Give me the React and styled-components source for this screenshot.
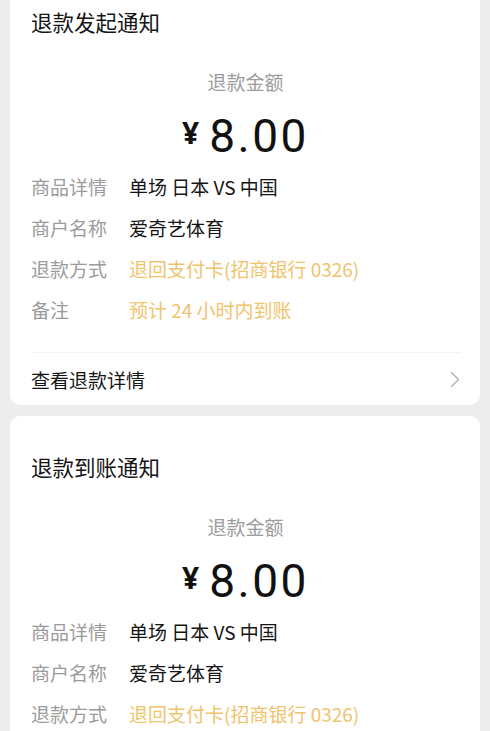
import React from "react";
import styled, { createGlobalStyle } from "styled-components";

const notices = [
  {
    title: "退款发起通知",
    amount: "8.00",
    rows: [
      { label: "商品详情", value: "单场 日本 VS 中国" },
      { label: "商户名称", value: "爱奇艺体育" },
      { label: "退款方式", value: "退回支付卡(招商银行 0326)", accent: true },
      { label: "备注", value: "预计 24 小时内到账", accent: true },
    ],
    link: "查看退款详情",
  },
  {
    title: "退款到账通知",
    amount: "8.00",
    rows: [
      { label: "商品详情", value: "单场 日本 VS 中国" },
      { label: "商户名称", value: "爱奇艺体育" },
      { label: "退款方式", value: "退回支付卡(招商银行 0326)", accent: true },
      { label: "备注", value: "预计 24 小时内到账", accent: true },
    ],
    link: "查看退款详情",
  },
];

function App() {
  return (
    <>
      <GlobalStyle />
      <Page>
        {notices.map((n, i) => (
          <Card key={i}>
            <Title>{n.title}</Title>
            <AmountLabel>退款金额</AmountLabel>
            <Amount>
              <Yen>¥</Yen>
              <Digits>{n.amount}</Digits>
            </Amount>
            <Rows>
              {n.rows.map((r) => (
                <Row key={r.label}>
                  <Label>{r.label}</Label>
                  <Value $accent={r.accent}>{r.value}</Value>
                </Row>
              ))}
            </Rows>
            <Footer>
              <span>{n.link}</span>
              <svg width="10" height="17" viewBox="0 0 10 17">
                <path
                  d="M1.5 1.5 L8.5 8.5 L1.5 15.5"
                  fill="none"
                  stroke="#b3b3b3"
                  strokeWidth="1.5"
                  strokeLinecap="round"
                  strokeLinejoin="round"
                />
              </svg>
            </Footer>
          </Card>
        ))}
      </Page>
    </>
  );
}

const GlobalStyle = createGlobalStyle`
  html, body {
    margin: 0;
    padding: 0;
    background: #ededed;
    font-family: "Noto Sans CJK SC", "Noto Sans", sans-serif;
  }
`;

const Page = styled.div`
  display: flex;
  flex-direction: column;
  gap: 11px;
  padding: 0 10px 20px;
  margin-top: -29px;
`;

const Card = styled.div`
  background: #fff;
  border-radius: 10px;
  padding: 37px 20px 0 21px;
`;

const Title = styled.div`
  font-size: 21.5px;
  line-height: 28px;
  color: #151515;
`;

const AmountLabel = styled.div`
  margin-top: 33px;
  text-align: center;
  font-size: 19px;
  line-height: 26px;
  color: #9b9b9b;
`;

const Amount = styled.div`
  margin-top: 13px;
  height: 56px;
  display: flex;
  justify-content: center;
  align-items: center;
  color: #111;
`;

const Yen = styled.span`
  font-family: "Noto Sans", sans-serif;
  font-size: 30px;
  line-height: 30px;
  font-weight: 700;
  margin-right: 10px;
  margin-top: -6px;
`;

const Digits = styled.span`
  font-family: "Roboto", "Noto Sans", sans-serif;
  font-size: 46px;
  line-height: 56px;
  letter-spacing: 2.5px;
`;

const Rows = styled.div`
  margin-top: 2px;
  display: flex;
  flex-direction: column;
`;

const Row = styled.div`
  display: flex;
  align-items: center;
  height: 41px;
  font-size: 19px;
`;

const Label = styled.span`
  width: 98px;
  color: #9b9b9b;
`;

const Value = styled.span`
  color: ${(p) => (p.$accent ? "#f0c36d" : "#151515")};
`;

const Footer = styled.div`
  margin-top: 22px;
  height: 52px;
  border-top: 1px solid #f3f3f3;
  display: flex;
  align-items: center;
  justify-content: space-between;
  font-size: 19px;
  color: #151515;
`;

export default App;
